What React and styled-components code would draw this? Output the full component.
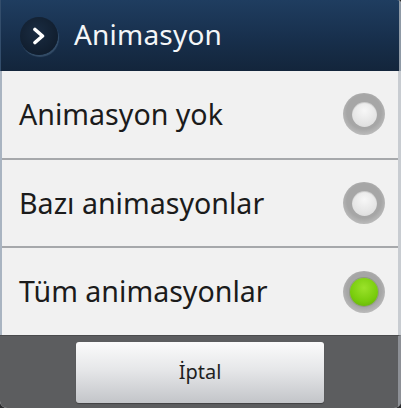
import React from "react";
import styled, { createGlobalStyle } from "styled-components";

const Global = createGlobalStyle`
  html, body { margin: 0; padding: 0; background: #2a2b2d; }
  body { font-family: "Noto Sans", "Open Sans", sans-serif; }
`;

const Dialog = styled.div`
  width: 401px;
  height: 408px;
  display: flex;
  flex-direction: column;
  box-sizing: border-box;
  overflow: hidden;
  border-radius: 0 4px 7px 7px;
  background: #f1f1f1;
`;

const Header = styled.div`
  height: 71px;
  flex: none;
  display: flex;
  align-items: center;
  box-sizing: border-box;
  padding-left: 19px;
  gap: 16px;
  background: linear-gradient(#1f3d60, #172e4a 60%, #13253b);
  border-right: 2px solid #8f9aa6;
  border-left: 1px solid #334d6b;
`;

const IconCircle = styled.div`
  width: 38px;
  height: 38px;
  border-radius: 50%;
  background: radial-gradient(circle at 45% 40%, #1a2c42, #101d2d 75%);
  box-shadow: 1px 2px 1px rgba(110, 140, 170, 0.35);
  display: flex;
  align-items: center;
  justify-content: center;
  margin-top: 1px;
`;

const Title = styled.div`
  color: #f4f6f8;
  font-size: 28px;
  letter-spacing: 0.2px;
  margin-top: -4px;
`;

const List = styled.div`
  flex: 1;
  display: flex;
  flex-direction: column;
  border-left: 2px solid #a9b4c1;
  border-right: 3px solid #c8ccd1;
`;

const Row = styled.div`
  flex: 1;
  display: flex;
  align-items: center;
  justify-content: space-between;
  padding: 0 13px 0 17px;
  box-sizing: border-box;
  border-top: ${(p) => (p.$first ? "none" : "2px solid #a6a8ab")};
  background: #f1f1f1;
`;

const Label = styled.div`
  font-size: 28.6px;
  color: #1b1b1b;
  margin-top: -2px;
`;

const RadioOuter = styled.div`
  width: 42px;
  height: 42px;
  border-radius: 50%;
  box-sizing: border-box;
  background: radial-gradient(circle at 50% 45%, #a6a6a6 55%, #c2c2c2 80%, #d6d6d6);
  display: flex;
  align-items: center;
  justify-content: center;
`;

const RadioInner = styled.div`
  width: ${(p) => (p.$on ? 28 : 25)}px;
  height: ${(p) => (p.$on ? 28 : 25)}px;
  border-radius: 50%;
  background: ${(p) =>
    p.$on
      ? "radial-gradient(circle at 50% 35%, #9be22a, #78cc0c 60%, #5ea808)"
      : "radial-gradient(circle at 50% 35%, #f7f7f7, #e2e2e2 70%, #d0d0d0)"};
  box-shadow: ${(p) => (p.$on ? "0 0 0 1px rgba(80,120,20,0.25)" : "inset 0 1px 1px rgba(0,0,0,0.15)")};
`;

const Footer = styled.div`
  height: 73px;
  flex: none;
  background: #5c5d5f;
  border-top: 1px solid #4a4b4d;
  display: flex;
  justify-content: center;
  padding-top: 6px;
  box-sizing: border-box;
  border-right: 3px solid #8d9096;
`;

const Button = styled.button`
  width: 248px;
  height: 61px;
  border: none;
  border-radius: 3px;
  background: linear-gradient(#fbfbfb, #e6e7e9 45%, #c3c5c9);
  box-shadow: 0 1px 1px rgba(0, 0, 0, 0.3);
  font-family: "Noto Sans", "Open Sans", sans-serif;
  font-size: 20px;
  color: #1f1f1f;
  display: flex;
  align-items: center;
  justify-content: center;
  padding: 0 0 2px 0;
  margin-left: 2px;
`;

const options = [
  { label: "Animasyon yok", on: false },
  { label: "Bazı animasyonlar", on: false },
  { label: "Tüm animasyonlar", on: true },
];

export default function App() {
  return (
    <>
      <Global />
      <Dialog>
        <Header>
          <IconCircle>
            <svg width="16" height="18" viewBox="0 0 16 18">
              <path d="M4 2.5 L11.5 9 L4 15.5" fill="none" stroke="#ffffff" strokeWidth="3.6" strokeLinecap="round" strokeLinejoin="round" />
            </svg>
          </IconCircle>
          <Title>Animasyon</Title>
        </Header>
        <List>
          {options.map((o, i) => (
            <Row key={o.label} $first={i === 0}>
              <Label>{o.label}</Label>
              <RadioOuter>
                <RadioInner $on={o.on} />
              </RadioOuter>
            </Row>
          ))}
        </List>
        <Footer>
          <Button>İptal</Button>
        </Footer>
      </Dialog>
    </>
  );
}
